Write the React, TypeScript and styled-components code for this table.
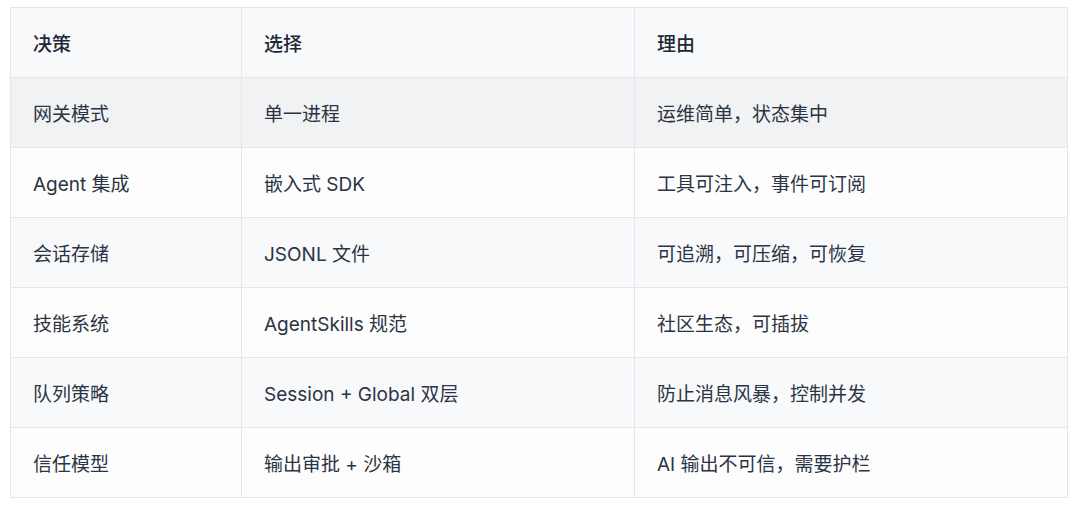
import styled, { createGlobalStyle } from 'styled-components';

const GlobalStyle = createGlobalStyle`
  html, body {
    margin: 0;
    padding: 0;
    background: #ffffff;
  }
  body {
    font-family: 'Inter', 'Noto Sans CJK SC', sans-serif;
    -webkit-font-smoothing: antialiased;
  }
`;

type Row = [string, string, string];

const header: Row = ['决策', '选择', '理由'];

const rows: Row[] = [
  ['网关模式', '单一进程', '运维简单，状态集中'],
  ['Agent 集成', '嵌入式 SDK', '工具可注入，事件可订阅'],
  ['会话存储', 'JSONL 文件', '可追溯，可压缩，可恢复'],
  ['技能系统', 'AgentSkills 规范', '社区生态，可插拔'],
  ['队列策略', 'Session + Global 双层', '防止消息风暴，控制并发'],
  ['信任模型', '输出审批 + 沙箱', 'AI 输出不可信，需要护栏'],
];

// 第一行是高亮行（hover 状态），其余奇偶交替
const rowBg = (idx: number) => {
  if (idx === 0) return '#f1f2f4';
  return idx % 2 === 0 ? '#f8f9fb' : '#fdfdfd';
};

export default function App() {
  return (
    <>
      <GlobalStyle />
      <StyledPage>
        <StyledTable>
          <colgroup>
            <col style={{ width: 231 }} />
            <col style={{ width: 393 }} />
            <col />
          </colgroup>
          <thead>
            <StyledRow $bg="#f8f9fb">
              {header.map((h) => (
                <StyledHeadCell key={h}>{h}</StyledHeadCell>
              ))}
            </StyledRow>
          </thead>
          <tbody>
            {rows.map((row, idx) => (
              <StyledRow key={`row-${idx}`} $bg={rowBg(idx)}>
                {row.map((cell, cIdx) => (
                  <StyledCell key={`cell-${idx}-${cIdx}`}>{cell}</StyledCell>
                ))}
              </StyledRow>
            ))}
          </tbody>
        </StyledTable>
      </StyledPage>
    </>
  );
}

const StyledPage = styled.div`
  padding: 7px 12px 0 10px;
`;

const StyledTable = styled.table`
  width: 1058px;
  border-collapse: collapse;
  table-layout: fixed;
  border: 1px solid #e4e6ea;
`;

const StyledRow = styled.tr<{ $bg: string }>`
  background: ${({ $bg }) => $bg};
  height: 70px;
`;

const StyledHeadCell = styled.th`
  text-align: left;
  padding: 0 22px;
  border: 1px solid #e4e6ea;
  font-size: 19px;
  font-weight: 500;
  color: #1f2835;
`;

const StyledCell = styled.td`
  padding: 0 22px;
  border: 1px solid #e4e6ea;
  font-size: 19px;
  font-weight: 400;
  color: #2b3443;
  white-space: nowrap;
`;
